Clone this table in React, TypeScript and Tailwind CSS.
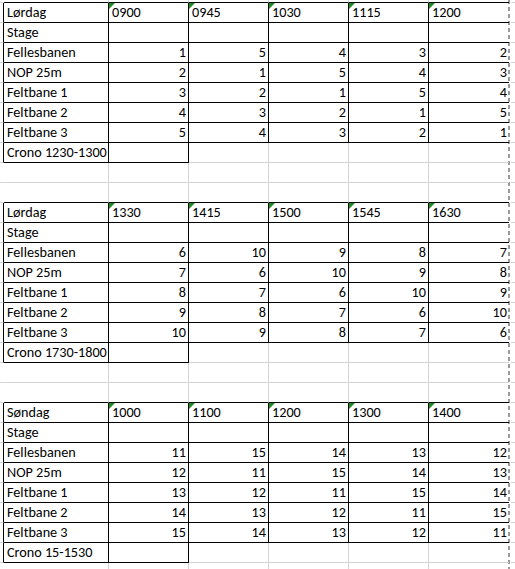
import React from 'react';

type Cell = { text?: string; num?: boolean; tri?: boolean };

const LANES = ['Fellesbanen', 'NOP 25m', 'Feltbane 1', 'Feltbane 2', 'Feltbane 3'];

const TABLES = [
  {
    day: 'Lørdag',
    times: ['0900', '0945', '1030', '1115', '1200'],
    rows: [[1, 5, 4, 3, 2], [2, 1, 5, 4, 3], [3, 2, 1, 5, 4], [4, 3, 2, 1, 5], [5, 4, 3, 2, 1]],
    crono: 'Crono 1230-1300',
  },
  {
    day: 'Lørdag',
    times: ['1330', '1415', '1500', '1545', '1630'],
    rows: [[6, 10, 9, 8, 7], [7, 6, 10, 9, 8], [8, 7, 6, 10, 9], [9, 8, 7, 6, 10], [10, 9, 8, 7, 6]],
    crono: 'Crono 1730-1800',
  },
  {
    day: 'Søndag',
    times: ['1000', '1100', '1200', '1300', '1400'],
    rows: [[11, 15, 14, 13, 12], [12, 11, 15, 14, 13], [13, 12, 11, 15, 14], [14, 13, 12, 11, 15], [15, 14, 13, 12, 11]],
    crono: 'Crono 15-1530',
  },
];

// sheet columns: sliver, A, B..F, remainder
const NCOLS = 8;

type Row = { cells: Cell[]; boxed: boolean[] };

function buildRows(): Row[] {
  const empty = (): Row => ({ cells: Array.from({ length: NCOLS }, () => ({})), boxed: Array(NCOLS).fill(false) });
  const tableBox = [false, true, true, true, true, true, true, false];
  const cronoBox = [false, true, true, false, false, false, false, false];
  const rows: Row[] = [];
  TABLES.forEach((t, ti) => {
    rows.push({
      cells: [{}, { text: t.day }, ...t.times.map((x) => ({ text: x, tri: true })), {}],
      boxed: tableBox,
    });
    rows.push({ cells: [{}, { text: 'Stage' }, {}, {}, {}, {}, {}, {}], boxed: tableBox });
    t.rows.forEach((r, i) => {
      rows.push({
        cells: [{}, { text: LANES[i] }, ...r.map((n) => ({ text: String(n), num: true })), {}],
        boxed: tableBox,
      });
    });
    rows.push({ cells: [{}, { text: t.crono }, {}, {}, {}, {}, {}, {}], boxed: cronoBox });
    if (ti < TABLES.length - 1) {
      rows.push(empty());
      rows.push(empty());
    }
  });
  rows.push(empty());
  return rows;
}

const WIDTHS = ['w-[3px]', 'w-[105px]', 'w-[80px]', 'w-[80px]', 'w-[80px]', 'w-[80px]', 'w-[80px]', 'w-[5px] ml-[2px]'];

function Triangle() {
  return (
    <svg className="absolute left-0 top-0" width="6" height="6" viewBox="0 0 6 6">
      <polygon points="0,0 6,0 0,6" fill="#1d8a1d" />
    </svg>
  );
}

export default function App() {
  const rows = buildRows();
  const top: Row = { cells: Array.from({ length: NCOLS }, () => ({})), boxed: Array(NCOLS).fill(false) };

  const renderRow = (row: Row, next: Row | undefined, key: number, h: string) => (
    <div key={key} className={`flex ${h}`}>
      {row.cells.map((c, ci) => {
        const own = row.boxed[ci];
        const rightBlack = own || row.boxed[ci + 1];
        const bottomBlack = own || (next ? next.boxed[ci] : false);
        const right =
          ci === 6 ? 'border-r-0' : ci === 0 && !rightBlack ? 'border-r border-r-transparent' : rightBlack ? 'border-r border-r-black' : 'border-r border-r-[#d4d4d4]';
        const bottom = bottomBlack ? 'border-b border-b-black' : 'border-b border-b-[#d4d4d4]';
        return (
          <div
            key={ci}
            className={`relative h-full shrink-0 flex items-end overflow-visible whitespace-nowrap pb-[1px] ${WIDTHS[ci]} ${right} ${bottom} ${
              c.num ? 'justify-end pr-[2px]' : 'pl-[3px]'
            }`}
          >
            {c.tri && <Triangle />}
            {c.text && <span className="leading-[17px]">{c.text}</span>}
          </div>
        );
      })}
    </div>
  );

  return (
    <div
      className="w-[515px] h-[569px] overflow-hidden bg-white text-black text-[14.2px] bg-[linear-gradient(#9a9a9a_0_4px,transparent_4px_7px)] bg-[length:2px_7px] bg-[position:508px_0] bg-repeat-y"
      style={{ fontFamily: 'Carlito, Lato, "Liberation Sans", sans-serif' }}
    >
      {renderRow(top, rows[0], -1, 'h-[3px]')}
      {rows.map((r, i) => renderRow(r, rows[i + 1], i, 'h-[20px]'))}
    </div>
  );
}
